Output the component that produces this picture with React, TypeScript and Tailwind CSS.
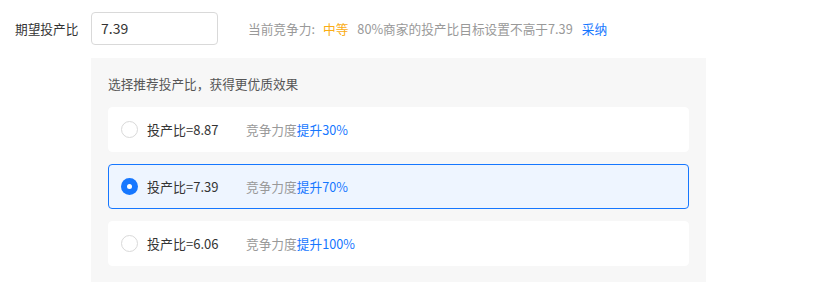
import React from "react";

const options = [
  { v: "8.87", up: "30%", selected: false },
  { v: "7.39", up: "70%", selected: true },
  { v: "6.06", up: "100%", selected: false },
];

export default function App() {
  return (
    <div
      className="w-[832px] h-[292px] bg-white text-[12.7px]"
      style={{ fontFamily: '"Noto Sans CJK SC", "Noto Sans", sans-serif' }}
    >
      <div className="flex items-center pt-[12px] pl-[15px] h-[45px]">
        <div className="w-[76px] text-[#333] leading-[18px]">期望投产比</div>
        <div className="w-[127px] h-[33px] border border-[#d9d9d9] rounded-[4px] flex items-center px-[9px] text-[14px] text-[#333]">
          7.39
        </div>
        <div className="ml-[30px] flex items-center leading-[18px]">
          <span className="text-[#999]">当前竞争力:</span>
          <span className="ml-[8px] text-[#faad14]">中等</span>
          <span className="ml-[9px] text-[#999]">80%商家的投产比目标设置不高于7.39</span>
          <span className="ml-[9px] text-[#1677ff]">采纳</span>
        </div>
      </div>
      <div className="ml-[91px] mt-[13px] w-[615px] h-[224px] bg-[#f7f7f7] px-[17px] pt-[17px]">
        <div className="text-[#555] leading-[18px] mb-[14px]">选择推荐投产比，获得更优质效果</div>
        <div className="flex flex-col gap-[12px]">
          {options.map((o) => (
            <div
              key={o.v}
              className={
                o.selected
                  ? "h-[45px] rounded-[4px] border border-[#1677ff] bg-[#eef5ff] flex items-center pl-[12px]"
                  : "h-[45px] rounded-[4px] border border-white bg-white flex items-center pl-[12px]"
              }
            >
              {o.selected ? (
                <span className="w-[17px] h-[17px] rounded-full bg-[#1677ff] flex items-center justify-center">
                  <span className="w-[5px] h-[5px] rounded-full bg-white" />
                </span>
              ) : (
                <span className="w-[17px] h-[17px] rounded-full border border-[#d9d9d9] bg-white" />
              )}
              <span className="ml-[9px] w-[99px] text-[#333] text-[13px]">投产比={o.v}</span>
              <span className="text-[#999]">竞争力度</span>
              <span className="text-[#1677ff]">提升{o.up}</span>
            </div>
          ))}
        </div>
      </div>
    </div>
  );
}
